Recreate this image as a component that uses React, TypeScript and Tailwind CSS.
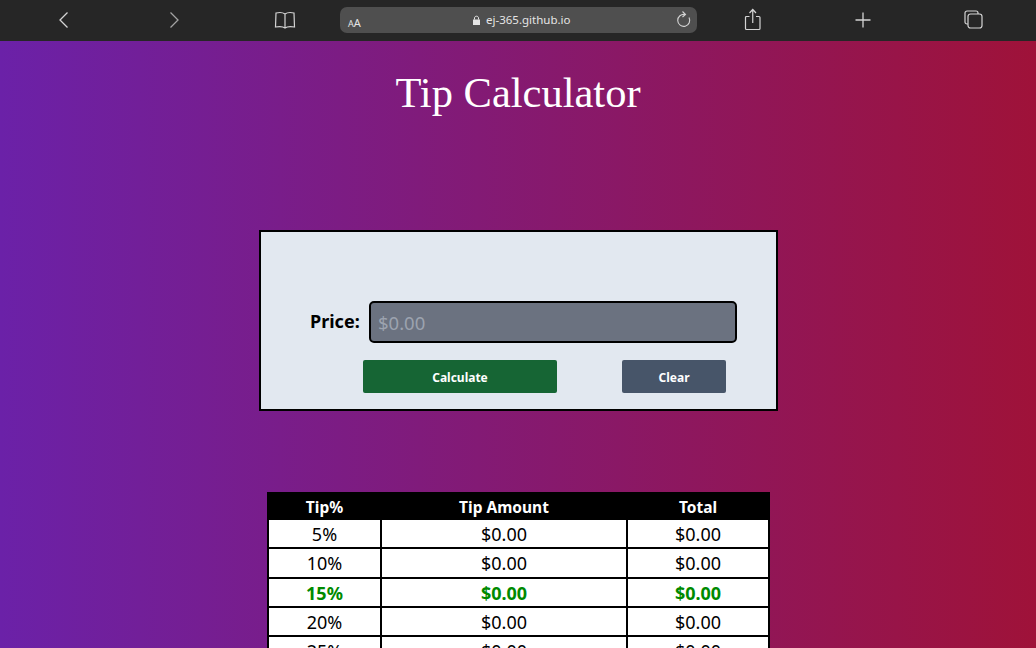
import React from "react";

const sans = "font-['Noto_Sans','Open_Sans',sans-serif]";

const rows = [
  { tip: "5%" },
  { tip: "10%" },
  { tip: "15%", best: true },
  { tip: "20%" },
  { tip: "25%" },
];

const BrowserBar = () => (
  <div className="h-[41px] bg-[#262626] flex items-center relative text-[#d4d4d4]">
    <svg className="absolute left-[58px] top-[11px]" width="12" height="18" viewBox="0 0 12 18" fill="none" stroke="currentColor" strokeWidth="1.3">
      <path d="M9.5 1.5 L2 9 L9.5 16.5" />
    </svg>
    <svg className="absolute left-[168px] top-[11px]" width="12" height="18" viewBox="0 0 12 18" fill="none" stroke="#a3a3a3" strokeWidth="1.3">
      <path d="M2.5 1.5 L10 9 L2.5 16.5" />
    </svg>
    <svg className="absolute left-[274px] top-[10px]" width="22" height="20" viewBox="0 0 22 20" fill="none" stroke="currentColor" strokeWidth="1.2">
      <path d="M11 4 C9 2.500 5 2.300 2 3 L1.500 17 C5 16.300 9 16.500 11 18 C13 16.500 17 16.300 20.500 17 L20 3 C17 2.300 13 2.500 11 4 Z M11 4 L11 18" />
    </svg>
    <div className="absolute left-[340px] top-[7px] w-[357px] h-[26px] bg-[#4f4f4f] rounded-[7px]">
      <span className={`absolute left-[8px] top-[6px] text-[#e5e5e5] leading-none ${sans}`}>
        <span className="text-[9px]">A</span>
        <span className="text-[11px]">A</span>
      </span>
      <div className={`absolute left-[132px] top-0 h-[26px] flex items-center gap-[5px] text-[11.5px] text-[#e5e5e5] ${sans}`}>
        <svg width="9" height="11" viewBox="0 0 9 11" fill="#e5e5e5">
          <path d="M1 4.500 H8 V10 H1 Z" />
          <path d="M2.500 4.500 V3 C2.500 0.600 6.500 0.600 6.500 3 V4.500" fill="none" stroke="#e5e5e5" strokeWidth="1" />
        </svg>
        <span>ej-365.github.io</span>
      </div>
      <svg className="absolute left-[335px] top-[3px]" width="17" height="20" viewBox="0 0 17 20" fill="none" stroke="currentColor" strokeWidth="1.1">
        <path d="M10 4.500 A6 6 0 1 0 14 7.500" />
        <path d="M7.500 1.500 L10.500 4.500 L7.500 7" />
      </svg>
    </div>
    <svg className="absolute left-[744px] top-[8px]" width="18" height="24" viewBox="0 0 18 24" fill="none" stroke="currentColor" strokeWidth="1.2">
      <path d="M5.500 8.500 H2.500 A1 1 0 0 0 1.500 9.500 V20.500 A1 1 0 0 0 2.500 21.500 H15 A1 1 0 0 0 16 20.500 V9.500 A1 1 0 0 0 15 8.500 H12" />
      <path d="M8.750 15 V2 M5.500 5 L8.750 1.500 L12 5" />
    </svg>
    <svg className="absolute left-[855px] top-[12px]" width="16" height="16" viewBox="0 0 16 16" fill="none" stroke="currentColor" strokeWidth="1.3">
      <path d="M8 0.500 V15.500 M0.500 8 H15.500" />
    </svg>
    <svg className="absolute left-[964px] top-[10px]" width="19" height="19" viewBox="0 0 19 19" fill="none" stroke="currentColor" strokeWidth="1.2">
      <path d="M4 14 H3 A2 2 0 0 1 1 12 V3 A2 2 0 0 1 3 1 H12 A2 2 0 0 1 14 3 V4" />
      <rect x="4" y="4" width="14" height="14" rx="2.500" />
    </svg>
  </div>
);

export default function App() {
  return (
    <div className="h-[648px] overflow-hidden bg-linear-to-r/srgb from-[#6b21a8] to-[#9f1239]">
      <BrowserBar />

      <h1 className="mt-[24px] h-[56px] text-center text-white text-[42.5px] leading-[56px] font-['Liberation_Serif','DejaVu_Serif',serif]">
        Tip Calculator
      </h1>

      <div className={`mt-[109px] ml-[259px] w-[519px] h-[181px] bg-[#e2e8f0] border-2 border-black pt-[69px] ${sans}`}>
        <div className="flex items-center h-[42px] pl-[49px]">
          <label className="text-[18px] font-bold text-black w-[59px] -mt-[1px]">Price:</label>
          <input
            placeholder="$0.00"
            className="w-[368px] h-[42px] bg-[#6b7280] border-2 border-black rounded-[5px] px-[7px] text-[18.5px] placeholder:text-[#9ca3af] outline-none"
          />
        </div>
        <div className="flex mt-[17px] pl-[102px]">
          <button className="w-[194px] h-[33px] pt-[2px] bg-[#166534] rounded-[2px] text-white text-[12px] font-bold">
            Calculate
          </button>
          <button className="ml-[65px] w-[104px] h-[33px] pt-[2px] bg-[#475569] rounded-[2px] text-white text-[12px] font-bold">
            Clear
          </button>
        </div>
      </div>

      <table className={`mt-[81px] ml-[267px] w-[501px] table-fixed border-collapse bg-white text-[18px] leading-[24px] text-black ${sans}`}>
        <colgroup>
          <col className="w-[113px]" />
          <col className="w-[246px]" />
          <col className="w-[142px]" />
        </colgroup>
        <thead>
          <tr className="h-[26px] bg-black text-white text-[15.5px] leading-[22px] font-bold">
            <th className="border-2 border-black p-0 pt-[1px]">Tip%</th>
            <th className="border-2 border-black p-0 pt-[1px]">Tip Amount</th>
            <th className="border-2 border-black p-0 pt-[1px]">Total</th>
          </tr>
        </thead>
        <tbody>
          {rows.map((row) => (
            <tr key={row.tip} className={`h-[29.3px] text-center ${row.best ? "text-[#008a00] font-bold" : ""}`}>
              <td className="border-2 border-black p-0 pt-[1px]">{row.tip}</td>
              <td className="border-2 border-black p-0 pt-[1px]">$0.00</td>
              <td className="border-2 border-black p-0 pt-[1px]">$0.00</td>
            </tr>
          ))}
        </tbody>
      </table>
    </div>
  );
}
